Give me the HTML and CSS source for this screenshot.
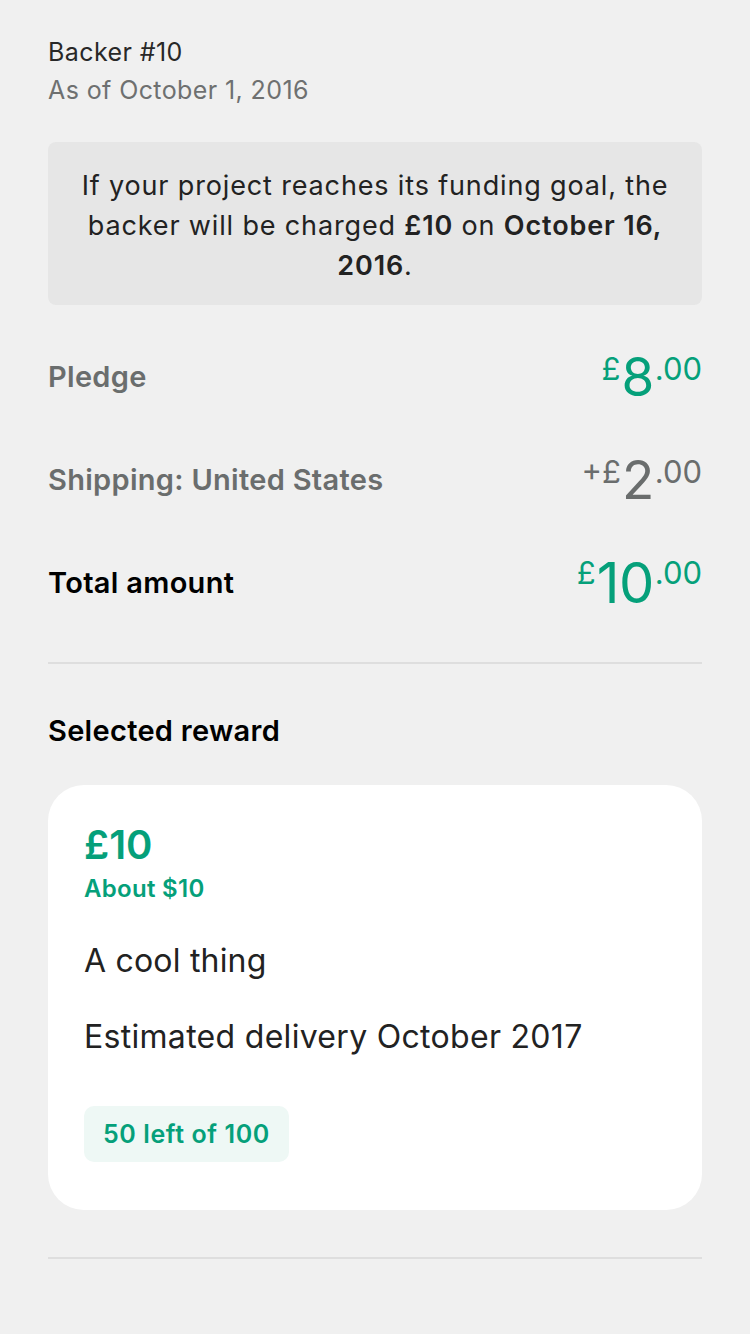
FILE: index.html
```html
<!DOCTYPE html>
<html>
<head>
<meta charset="utf-8">
<link rel="stylesheet" href="styles.css">
</head>
<body>
<div class="page">
  <div class="header">
    <div class="backer">Backer #10</div>
    <div class="asof">As of October 1, 2016</div>
  </div>
  <div class="notice">If your project reaches its funding goal, the backer will be charged <b>£10</b> on <b>October 16, 2016</b>.</div>
  <div class="rows">
    <div class="row">
      <div class="label">Pledge</div>
      <div class="amount green"><span class="cur">£</span><span class="big">8</span><span class="cents">.00</span></div>
    </div>
    <div class="row">
      <div class="label">Shipping: United States</div>
      <div class="amount grey"><span class="cur">+£</span><span class="big">2</span><span class="cents">.00</span></div>
    </div>
    <div class="row">
      <div class="label total">Total amount</div>
      <div class="amount green totalamt"><span class="cur">£</span><span class="big">10</span><span class="cents">.00</span></div>
    </div>
  </div>
  <div class="divider"></div>
  <div class="section-title">Selected reward</div>
  <div class="card">
    <div class="price">£10</div>
    <div class="about">About $10</div>
    <div class="title">A cool thing</div>
    <div class="delivery">Estimated delivery October 2017</div>
    <div class="badge">50 left of 100</div>
  </div>
  <div class="divider bottom"></div>
</div>
</body>
</html>
```

FILE: styles.css
```css
html, body {
  margin: 0;
  padding: 0;
  background: #f0f0f0;
}
body {
  font-family: Inter, "Noto Sans", sans-serif;
  color: #282828;
}
.page {
  padding: 34px 48px 0 48px;
  display: flex;
  flex-direction: column;
}
.header {
  display: flex;
  flex-direction: column;
}
.backer {
  font-size: 25px;
  letter-spacing: 0.4px;
  line-height: 36px;
  color: #282828;
}
.asof {
  font-size: 25px;
  letter-spacing: 0.4px;
  line-height: 36px;
  color: #6e7070;
  margin-top: 2px;
}
.notice {
  margin-top: 34px;
  background: #e6e6e6;
  border-radius: 8px;
  padding: 24px 26px 19px;
  text-align: center;
  font-size: 27px;
  letter-spacing: 0.85px;
  line-height: 40px;
  color: #222;
}
.notice b {
  font-weight: 600;
}
.rows {
  display: flex;
  flex-direction: column;
  margin-top: 40px;
  gap: 39px;
}
.row {
  display: flex;
  justify-content: space-between;
  align-items: center;
  height: 64px;
}
.label {
  font-size: 29px;
  letter-spacing: 0.3px;
  font-weight: 600;
  color: #6a6d6d;
  line-height: 40px;
}
.label.total {
  color: #000;
}
.amount {
  display: flex;
  align-items: flex-start;
  font-weight: 400;
}
.amount .cur {
  font-size: 31px;
  line-height: 31px;
  margin-top: 2px;
  margin-right: 1px;
}
.amount .big {
  font-size: 53px;
  line-height: 53px;
  letter-spacing: -0.5px;
}
.amount .cents {
  font-size: 31px;
  line-height: 31px;
  margin-top: 2px;
  margin-left: 1px;
}
.totalamt .big {
  font-size: 56px;
  line-height: 56px;
}
.green {
  color: #05a07a;
}
.grey {
  color: #6a6d6d;
}
.divider {
  height: 2px;
  background: #dedede;
  margin-top: 47px;
}
.section-title {
  margin-top: 49px;
  font-size: 29px;
  letter-spacing: 0.3px;
  font-weight: 600;
  color: #000;
  line-height: 36px;
}
.card {
  margin-top: 36px;
  background: #fff;
  border-radius: 36px;
  padding: 35px 36px 48px;
  display: flex;
  flex-direction: column;
  align-items: flex-start;
}
.price {
  font-size: 40px;
  font-weight: 600;
  color: #05a07a;
  line-height: 50px;
}
.about {
  font-size: 24px;
  letter-spacing: 0.3px;
  font-weight: 600;
  color: #05a07a;
  line-height: 30px;
  margin-top: 4px;
}
.title {
  margin-top: 37px;
  font-size: 32px;
  letter-spacing: 0.2px;
  line-height: 40px;
  color: #222;
}
.delivery {
  margin-top: 36px;
  font-size: 32px;
  letter-spacing: 0.3px;
  line-height: 40px;
  color: #222;
}
.badge {
  margin-top: 49px;
  background: #eef8f5;
  border-radius: 10px;
  padding: 12px 19px;
  font-size: 25px;
  letter-spacing: 0.6px;
  font-weight: 600;
  line-height: 32px;
  color: #05a07a;
}
.divider.bottom {
  margin-top: 47px;
}
```
